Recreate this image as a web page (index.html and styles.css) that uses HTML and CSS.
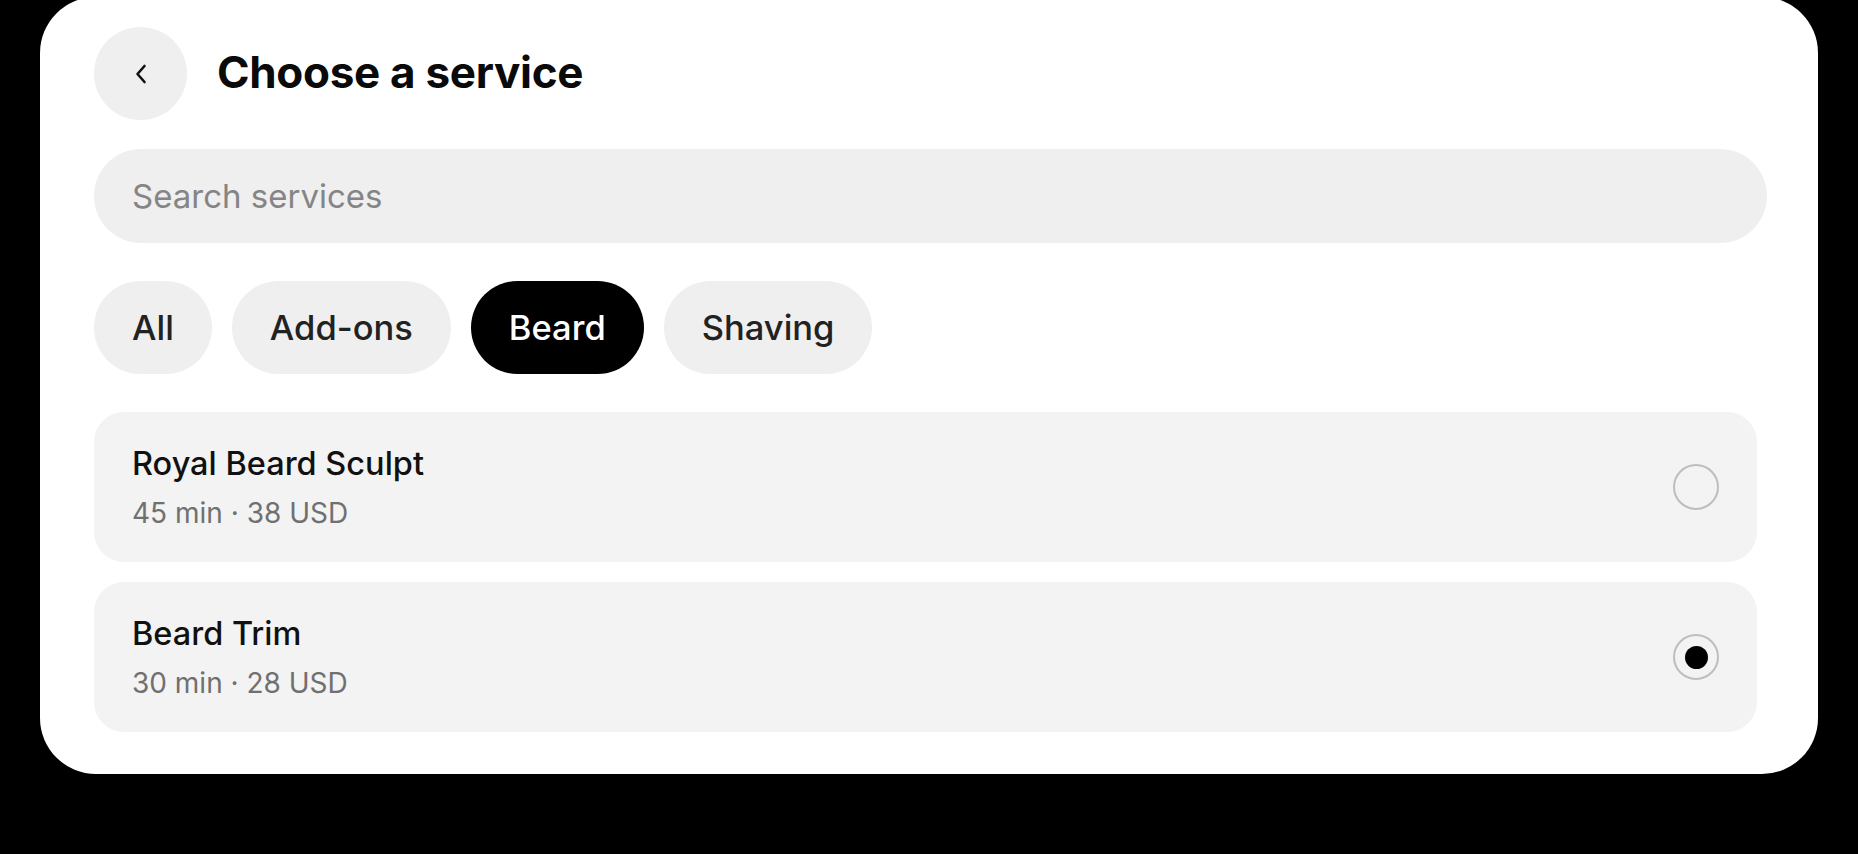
FILE: index.html
```html
<!DOCTYPE html>
<html lang="en">
<head>
	<meta charset="UTF-8">
	<title>Choose a service</title>
	<link rel="stylesheet" href="styles.css">
</head>
<body>
	<div class="sheet">
		<div class="header">
			<button class="back" type="button" aria-label="Back">
				<svg width="16" height="24" viewBox="0 0 16 24" fill="none" stroke="#111" stroke-width="2.6" stroke-linecap="round" stroke-linejoin="round">
					<path d="M11.5 4 L4.5 12 L11.5 20"/>
				</svg>
			</button>
			<h1>Choose a service</h1>
		</div>

		<div class="search">
			<input type="text" placeholder="Search services">
		</div>

		<div class="chips">
			<span class="chip">All</span>
			<span class="chip">Add-ons</span>
			<span class="chip active">Beard</span>
			<span class="chip">Shaving</span>
		</div>

		<div class="list">
			<div class="service">
				<div class="info">
					<div class="name">Royal Beard Sculpt</div>
					<div class="meta">45 min · 38 USD</div>
				</div>
				<span class="radio"></span>
			</div>
			<div class="service">
				<div class="info">
					<div class="name">Beard Trim</div>
					<div class="meta">30 min · 28 USD</div>
				</div>
				<span class="radio checked"></span>
			</div>
		</div>
	</div>
</body>
</html>
```

FILE: styles.css
```css
*{
	margin:0;
	padding:0;
	box-sizing:border-box;
}

body{
	background:#000;
	font-family:Inter, "Noto Sans", sans-serif;
	color:#111;
	height:854px;
	overflow:hidden;
}

.sheet{
	margin:-3px 40px 0;
	padding:30px 51px 42px 54px;
	background:#fff;
	border-radius:56px;
}

.header{
	display:flex;
	align-items:center;
	gap:30px;
}

.back{
	width:93px;
	height:93px;
	border:none;
	border-radius:50%;
	background:#efefef;
	display:flex;
	align-items:center;
	justify-content:center;
}

.header h1{
	font-size:44px;
	font-weight:700;
	letter-spacing:-0.3px;
	color:#0a0a0a;
	margin-top:-4px;
}

.search{
	margin-top:29px;
}

.search input{
	width:100%;
	height:94px;
	border:none;
	outline:none;
	border-radius:47px;
	background:#efefef;
	padding:0 38px;
	font-family:inherit;
	font-size:33px;
	color:#111;
}

.search input::placeholder{
	color:#858585;
}

.chips{
	display:flex;
	gap:20px;
	margin-top:38px;
}

.chip{
	height:93px;
	padding:0 38px;
	border-radius:47px;
	background:#efefef;
	color:#222;
	font-size:34.5px;
	font-weight:500;
	display:flex;
	align-items:center;
}

.chip.active{
	background:#000;
	color:#fff;
}

.list{
	display:flex;
	flex-direction:column;
	gap:20px;
	margin-top:38px;
	margin-right:10px;
}

.service{
	height:150px;
	padding:0 38px;
	border-radius:30px;
	background:#f3f3f3;
	display:flex;
	align-items:center;
	justify-content:space-between;
}

.name{
	font-size:32.5px;
	font-weight:500;
	color:#111;
}

.meta{
	margin-top:13px;
	font-size:28px;
	color:#707070;
}

.radio{
	width:46px;
	height:46px;
	border:2px solid #bdbdbd;
	border-radius:50%;
	display:flex;
	align-items:center;
	justify-content:center;
}

.radio.checked::after{
	content:"";
	width:23px;
	height:23px;
	border-radius:50%;
	background:#000;
}
```
